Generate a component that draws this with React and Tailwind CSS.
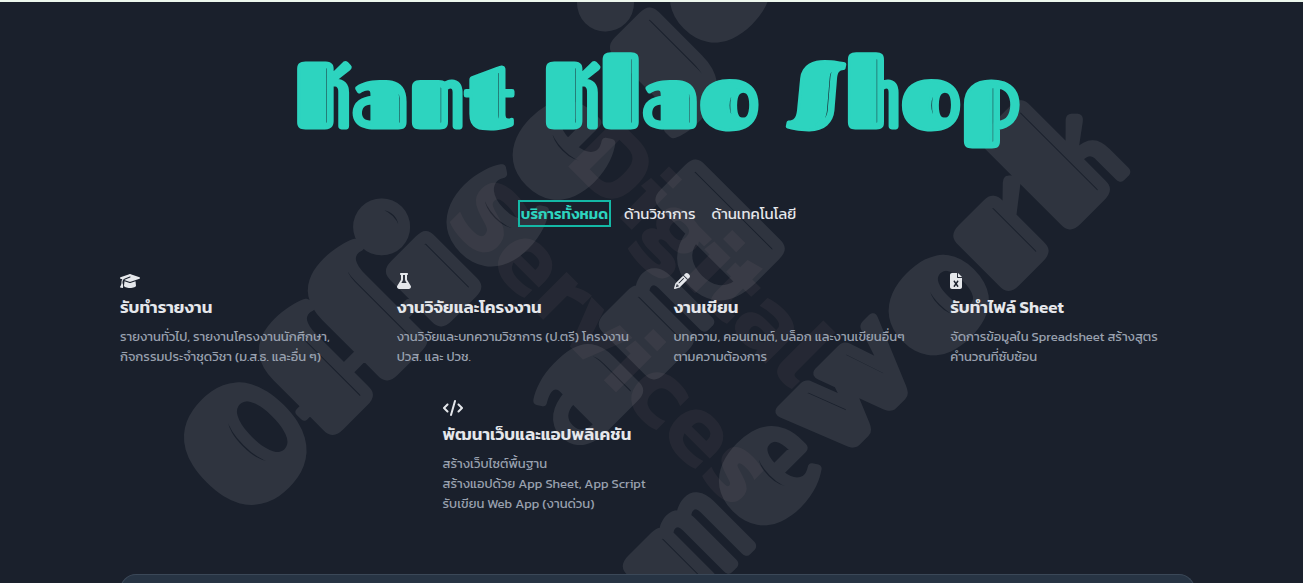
import { FaGraduationCap, FaFlask, FaPencil, FaFileExcel, FaCode } from "react-icons/fa6";

const services = [
  { icon: FaGraduationCap, iconClass: "w-5", title: "รับทำรายงาน", lines: ["รายงานทั่วไป, รายงานโครงงานนักศึกษา,", "กิจกรรมประจำชุดวิชา (ม.ส.ธ. และอื่น ๆ)"] },
  { icon: FaFlask, iconClass: "w-3.5", title: "งานวิจัยและโครงงาน", lines: ["งานวิจัยและบทความวิชาการ (ป.ตรี) โครงงาน", "ปวส. และ ปวช."] },
  { icon: FaPencil, iconClass: "w-4", title: "งานเขียน", lines: ["บทความ, คอนเทนต์, บล็อก และงานเขียนอื่นๆ", "ตามความต้องการ"] },
  { icon: FaFileExcel, iconClass: "w-3", title: "รับทำไฟล์ Sheet", lines: ["จัดการข้อมูลใน Spreadsheet สร้างสูตร", "คำนวณที่ซับซ้อน"] },
];

const webService = {
  icon: FaCode,
  iconClass: "w-5",
  title: "พัฒนาเว็บและแอปพลิเคชัน",
  lines: ["สร้างเว็บไซต์พื้นฐาน", "สร้างแอปด้วย App Sheet, App Script", "รับเขียน Web App (งานด่วน)"],
};

function Service({ icon: Icon, iconClass, title, lines }) {
  return (
    <article className="text-gray-200">
      <Icon className={`h-4 ${iconClass}`} aria-hidden="true" />
      <h2 className="mt-1 text-[17px] leading-7 font-semibold whitespace-nowrap">{title}</h2>
      <p className="mt-1.5 text-[13px] leading-5 text-gray-400">
        {lines.map((line) => (
          <span key={line} className="block whitespace-nowrap">{line}</span>
        ))}
      </p>
    </article>
  );
}

function Watermark() {
  return (
    <div aria-hidden="true" className="pointer-events-none absolute inset-0 overflow-hidden">
      <div className="absolute top-[306px] left-[642px] -translate-x-1/2 -translate-y-1/2">
        <p className="-rotate-45 text-center font-['Fascinate_Inline','Fascinate',Lato] text-[160px] leading-[188px] font-bold whitespace-nowrap text-white opacity-[0.09] [-webkit-text-stroke:5px_white]">
          Office job<br />and<br /><span className="pl-10">homework</span>
        </p>
      </div>
      <div className="absolute top-[293px] left-[660px] -translate-x-1/2 -translate-y-1/2">
        <p className="rotate-45 text-center font-[Kanit,'Noto_Sans'] text-[106px] leading-[126px] font-semibold whitespace-nowrap text-[#f0c0c0] opacity-5">
          Digital<br />Services
        </p>
      </div>
    </div>
  );
}

export default function App() {
  return (
    <div className="relative h-screen overflow-hidden border-t-2 border-[#edf7ed] bg-[#1a202c] pl-3 font-[Kanit,'Noto_Sans_Thai','Noto_Sans',sans-serif]">
      <Watermark />
      <div className="relative mx-auto max-w-[1075px]">
        <h1 className="pt-9 text-center font-['Fascinate_Inline','Fascinate',Lato] text-[92px] leading-[112px] font-bold whitespace-nowrap text-[#2dd4bf] [-webkit-text-stroke:3px_#2dd4bf]">
          Kant Klao Shop
        </h1>
        <nav className="mt-[50px] flex items-center justify-center gap-3">
          <button className="border-2 border-[#14b8a6] px-px text-[15px] leading-[23px] font-semibold text-[#2dd4bf]">บริการทั้งหมด</button>
          <button className="px-px text-[15px] leading-[23px] text-gray-200">ด้านวิชาการ</button>
          <button className="ml-0.5 px-px text-[15px] leading-[23px] text-gray-200">ด้านเทคโนโลยี</button>
        </nav>
        <main className="pt-[46px]">
          <section className="grid grid-cols-4 gap-8">
            {services.map((service) => (
              <Service key={service.title} {...service} />
            ))}
          </section>
          <section className="mx-auto mt-[33px] w-2/5">
            <Service {...webService} />
          </section>
        </main>
        <div className="mt-[60px] h-10 rounded-t-2xl border border-b-0 border-[#3b4858] bg-[#273444]" />
      </div>
    </div>
  );
}
